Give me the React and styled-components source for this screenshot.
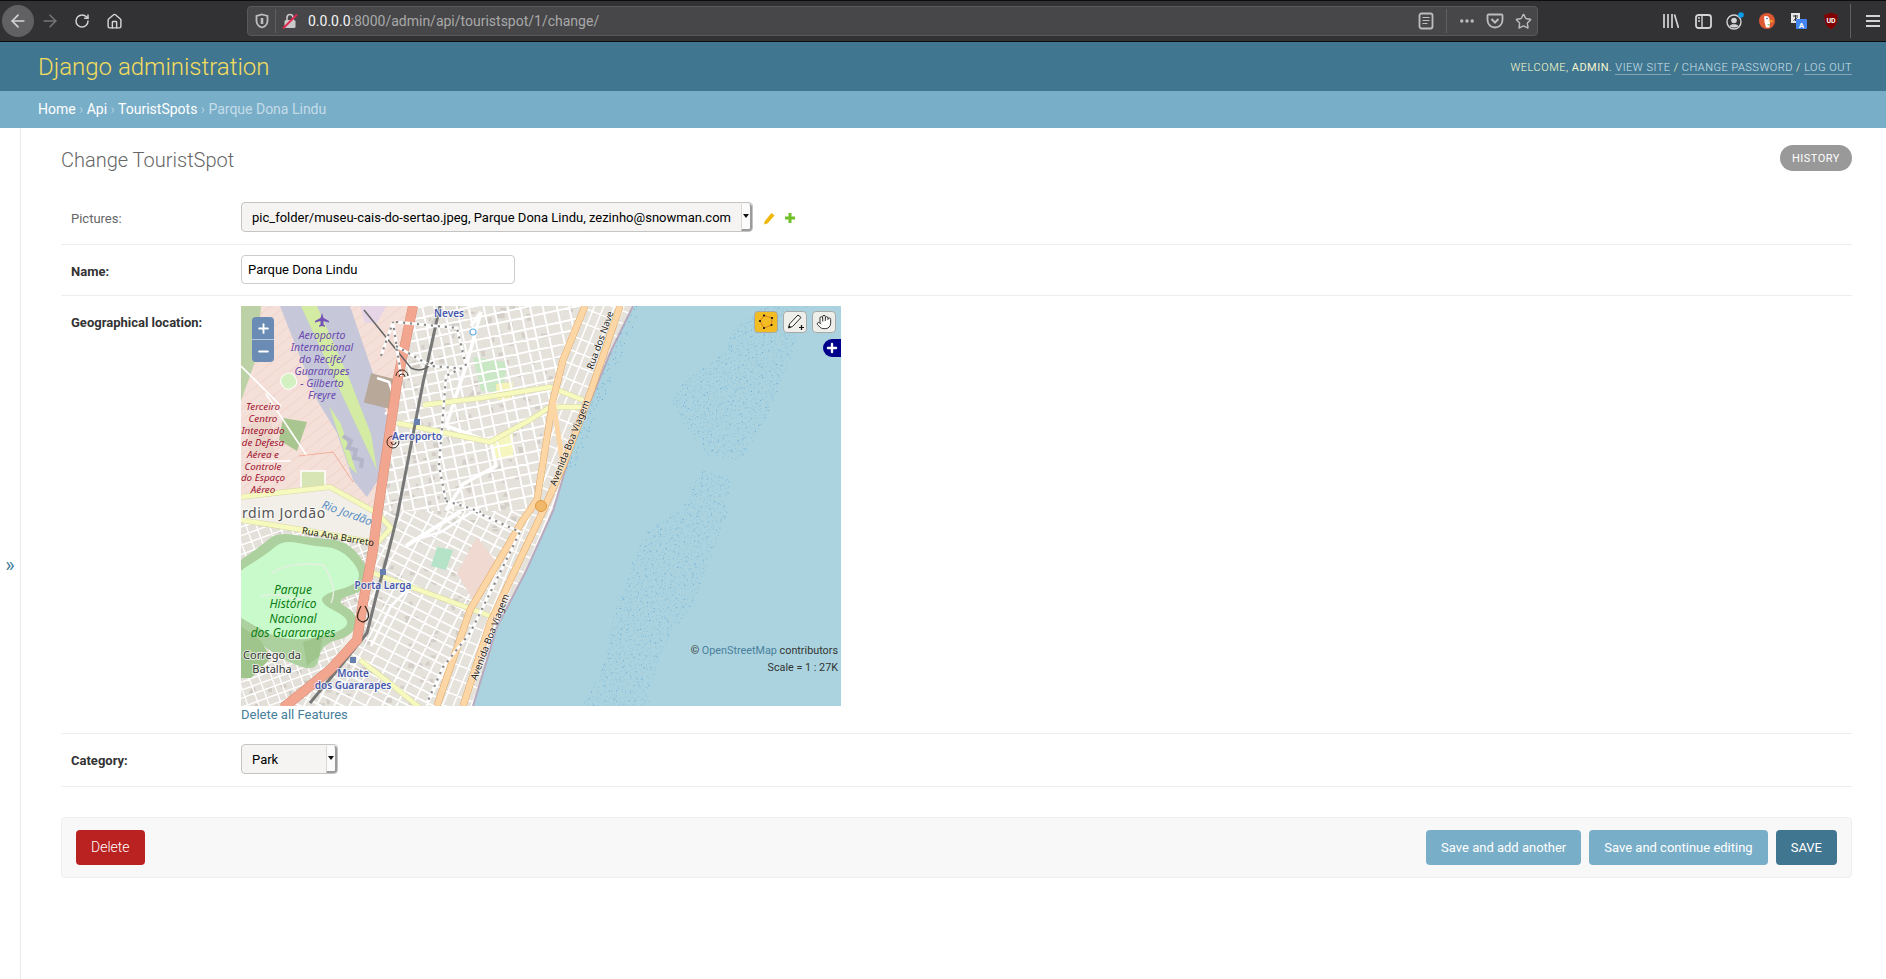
import React from 'react'
import styled, { createGlobalStyle } from 'styled-components'
import { ArrowLeft, ArrowRight, RotateCw, House, Star, Ellipsis, Hand, Plus, Minus } from 'lucide-react'

const GlobalStyle = createGlobalStyle`
  html, body { margin: 0; padding: 0; background: #fff; }
  body { font-family: Roboto, "Liberation Sans", sans-serif; font-size: 14px; color: #333; }
  * { box-sizing: border-box; }
`

/* ---------- browser chrome ---------- */
const BrowserBar = styled.div`
  display: flex;
  align-items: center;
  height: 42px;
  padding-left: 2px;
  background: #323234;
  border-top: 1px solid #0c0c0d;
  border-bottom: 1px solid #0c0c0d;
  color: #d4d4d5;
`
const Slot = styled.div`
  width: 32px;
  height: 32px;
  flex: none;
  display: flex;
  align-items: center;
  justify-content: center;
  border-radius: 50%;
  background: ${p => (p.$active ? '#616163' : 'transparent')};
  color: ${p => (p.$dim ? '#77777a' : 'inherit')};
`
const MenuSlot = styled(Slot)`
  margin-left: 6px;
`
const ChromeGap = styled.div`
  width: 3px;
  flex: none;
`
const UrlBar = styled.div`
  width: 1291px;
  height: 30px;
  margin: 0 117px;
  flex: none;
  display: flex;
  align-items: center;
  background: #474749;
  border: 1px solid #59595b;
  border-radius: 4px;
  color: #bdbdbe;
`
const UrlIcon = styled.div`
  width: ${p => p.$w || 28}px;
  flex: none;
  display: flex;
  justify-content: center;
`
const Sep = styled.div`
  width: 1px;
  height: ${p => p.$h || 24}px;
  background: #606062;
  flex: none;
`
const UrlText = styled.div`
  flex: 1;
  margin-left: 5px;
  font-size: 14px;
  color: #a9a9aa;
  white-space: nowrap;
  b { font-weight: 400; color: #f4f4f5; }
`

/* ---------- django header ---------- */
const Header = styled.header`
  display: flex;
  justify-content: space-between;
  align-items: center;
  height: 49px;
  padding: 0 34px 0 38px;
  background: #417690;
`
const Branding = styled.h1`
  margin: 0;
  font-size: 24px;
  font-weight: 300;
  color: #f5dd5d;
`
const UserTools = styled.div`
  padding-top: 1px;
  font-size: 11px;
  font-weight: 300;
  letter-spacing: 0.5px;
  color: #ffc;
  text-transform: uppercase;
  strong { font-weight: 400; color: #f5f5d0; }
`
const UserLink = styled.a`
  color: #cfe3ee;
  border-bottom: 1px solid rgba(255, 255, 255, 0.35);
`
const Breadcrumbs = styled.div`
  height: 37px;
  padding: 0 0 2px 38px;
  display: flex;
  align-items: center;
  background: #79aec8;
  color: #c4dce8;
  font-size: 14px;
  font-weight: 300;
  a { color: #fff; font-weight: 400; }
  span { font-weight: 400; }
`

/* ---------- page ---------- */
const Main = styled.div`
  display: flex;
  min-height: 851px;
`
const SideToggle = styled.div`
  width: 21px;
  flex: none;
  border-right: 1px solid #eaeaea;
  display: flex;
  align-items: center;
  justify-content: center;
  color: #447e9b;
  font-size: 20px;
  padding: 22px 0 0 0;
`
const Content = styled.main`
  flex: 1;
  padding: 17px 34px 0 40px;
`
const TitleRow = styled.div`
  display: flex;
  justify-content: space-between;
  align-items: flex-start;
  height: 47px;
`
const Title = styled.h2`
  margin: 0;
  font-size: 20px;
  font-weight: 300;
  line-height: 30px;
  color: #666;
`
const HistoryLink = styled.a`
  width: 72px;
  height: 26px;
  display: flex;
  align-items: center;
  justify-content: center;
  border-radius: 15px;
  background: #999;
  color: #fff;
  font-size: 11px;
  letter-spacing: 0.5px;
  text-transform: uppercase;
`
const Row = styled.div`
  display: flex;
  padding: 10px 0 ${p => p.$pb || 11}px 10px;
  border-bottom: 1px solid #eee;
`
const Label = styled.label`
  width: 170px;
  flex: none;
  padding-top: 9px;
  font-size: 13px;
  line-height: 16px;
  font-weight: ${p => (p.$bold ? 700 : 400)};
  color: ${p => (p.$bold ? '#333' : '#666')};
`
const Controls = styled.div`
  display: flex;
  align-items: center;
  gap: 10px;
`
const SelectBox = styled.div`
  position: relative;
  width: ${p => p.$w}px;
  height: 30px;
  display: flex;
  align-items: center;
  padding-left: ${p => p.$pl}px;
  background: #f5f4f2;
  border: 1px solid #c4c4c4;
  border-radius: 4px;
  color: #000;
  font-size: 13px;
  white-space: nowrap;
`
const SelectArrow = styled.span`
  position: absolute;
  top: 1px;
  right: 0;
  bottom: 0;
  width: 11px;
  background: #fbfbfb;
  border-left: 1px solid #d8d8d8;
  border-right: 2px solid #9b9b9b;
  border-bottom: 2px solid #9b9b9b;
  border-radius: 0 3px 3px 0;
  &::after {
    content: '';
    position: absolute;
    left: 1px;
    top: 10px;
    border: 3px solid transparent;
    border-top: 4px solid #111;
  }
`
const RelatedIcons = styled.div`
  display: flex;
  align-items: center;
  gap: 9px;
  padding-top: 2px;
`
const TextInput = styled.input`
  width: 274px;
  height: 29px;
  padding: 0 6px;
  margin-bottom: 0;
  border: 1px solid #ccc;
  border-radius: 4px;
  color: #000;
  font: 13px Roboto, sans-serif;
`
const MapColumn = styled.div`
  width: 600px;
`
const MapFrame = styled.div`
  position: relative;
  width: 600px;
  height: 400px;
  overflow: hidden;
  background: #aad3df;
  svg.base { display: block; }
`
const ZoomBox = styled.div`
  position: absolute;
  left: 11px;
  top: 11px;
  width: 22px;
  height: 45px;
  display: flex;
  flex-direction: column;
  border-radius: 4px;
  overflow: hidden;
  background: #6a8bb4;
  color: #fff;
`
const ZoomButton = styled.div`
  flex: 1;
  display: flex;
  align-items: center;
  justify-content: center;
  border-top: ${p => (p.$second ? '1px solid #b7c7dc' : 'none')};
`
const DrawTools = styled.div`
  position: absolute;
  top: 5px;
  right: 5px;
  display: flex;
  gap: 5px;
`
const DrawTool = styled.div`
  width: 24px;
  height: 22px;
  display: flex;
  align-items: center;
  justify-content: center;
  border: 1px solid #a9a9a9;
  border-radius: 4px;
  background: ${p => (p.$active ? '#f2bd22' : '#eeeeea')};
  color: #222;
`
const LayerSwitch = styled.div`
  position: absolute;
  top: 33px;
  right: 0;
  width: 18px;
  height: 18px;
  display: flex;
  align-items: center;
  justify-content: center;
  background: #00008b;
  border-radius: 9px 0 0 9px;
  color: #fff;
`
const MapNotes = styled.div`
  position: absolute;
  right: 3px;
  top: 336px;
  font-size: 10.8px;
  line-height: 17px;
  text-align: right;
  color: #333;
  a { color: #4a7f9c; }
`
const DeleteFeatures = styled.a`
  display: block;
  margin-top: 1px;
  font-size: 13px;
  line-height: 16px;
  color: #447e9b;
`
const SubmitRow = styled.div`
  display: flex;
  justify-content: space-between;
  height: 61px;
  margin-top: 30px;
  padding: 12px 14px;
  background: #f8f8f8;
  border: 1px solid #eee;
  border-radius: 4px;
`
const ButtonGroup = styled.div`
  display: flex;
  gap: 8px;
`
const ActionButton = styled.a`
  height: 35px;
  display: flex;
  align-items: center;
  padding: 0 15px;
  border-radius: 4px;
  background: ${p => p.$bg || '#79aec8'};
  color: #fff;
  font-size: 13px;
  font-weight: 400;
`
const DeleteButton = styled(ActionButton)`
  padding: 0 15px 2px;
  font-size: 14px;
  font-weight: 300;
`

/* ---------- map drawing ---------- */
function makeRandom(seed) {
  let s = seed
  return () => {
    s = (s + 0x6d2b79f5) | 0
    let t = Math.imul(s ^ (s >>> 15), 1 | s)
    t = (t + Math.imul(t ^ (t >>> 7), 61 | t)) ^ t
    return ((t ^ (t >>> 14)) >>> 0) / 4294967296
  }
}
function inside(pt, poly) {
  let hit = false
  for (let i = 0, j = poly.length - 1; i < poly.length; j = i++) {
    const [xi, yi] = poly[i]
    const [xj, yj] = poly[j]
    if (yi > pt[1] !== yj > pt[1] && pt[0] < ((xj - xi) * (pt[1] - yi)) / (yj - yi) + xi) hit = !hit
  }
  return hit
}
function stipple(poly, gap, seed) {
  const rand = makeRandom(seed)
  let d = ''
  for (let y = -5; y < 405; y += gap) {
    for (let x = 225; x < 605; x += gap) {
      const px = x + (rand() - 0.5) * gap
      const py = y + (rand() - 0.5) * gap
      if (inside([px, py], poly)) d += `M${px.toFixed(1)} ${py.toFixed(1)}h.01`
    }
  }
  return d
}
function gridLines(cx, cy, angle, stepA, stepB, seed) {
  const rand = makeRandom(seed)
  const c = Math.cos((angle * Math.PI) / 180)
  const s = Math.sin((angle * Math.PI) / 180)
  const R = 420
  let d = ''
  for (let i = -R; i <= R; i += stepA) {
    const o = i + (rand() - 0.5) * 2
    d += `M${(cx - R * c - o * s).toFixed(1)} ${(cy - R * s + o * c).toFixed(1)}L${(cx + R * c - o * s).toFixed(1)} ${(cy + R * s + o * c).toFixed(1)}`
  }
  for (let i = -R; i <= R; i += stepB) {
    const o = i + (rand() - 0.5) * 3
    d += `M${(cx + o * c + R * s).toFixed(1)} ${(cy + o * s - R * c).toFixed(1)}L${(cx + o * c - R * s).toFixed(1)} ${(cy + o * s + R * c).toFixed(1)}`
  }
  return d
}
function buildings(count, seed) {
  const rand = makeRandom(seed)
  let d = ''
  for (let i = 0; i < count; i++) {
    const x = rand() * 400
    const y = rand() * 400
    d += `M${x.toFixed(1)} ${y.toFixed(1)}h${(2 + rand() * 5).toFixed(1)}v${(2 + rand() * 5).toFixed(1)}h-${(2 + rand() * 5).toFixed(1)}z`
  }
  return d
}
const pts = poly => poly.map(p => p.join(',')).join(' ')
const curve = line => 'M' + line.map(p => p.join(' ')).join('L')
function smooth(poly) {
  const mid = (a, b) => [(a[0] + b[0]) / 2, (a[1] + b[1]) / 2]
  let d = `M${mid(poly[poly.length - 1], poly[0]).join(' ')}`
  poly.forEach((p, i) => {
    d += `Q${p.join(' ')} ${mid(p, poly[(i + 1) % poly.length]).join(' ')}`
  })
  return d + 'z'
}

const reefNorth = [[522, -2], [569, -2], [556, 31], [546, 64], [529, 104], [502, 154], [469, 151], [446, 124], [431, 97], [442, 77], [486, 44], [489, 27]]
const reefSouth = [[462, 162], [489, 174], [486, 207], [469, 254], [452, 297], [432, 327], [416, 361], [406, 402], [339, 402], [362, 361], [372, 311], [387, 274], [391, 256], [404, 227], [426, 211], [446, 197], [449, 181]]
const coastShoal = [[392, 0], [400, 0], [376, 60], [352, 120], [332, 165], [322, 165], [345, 100], [370, 45]]
const reefPathA = stipple(reefNorth, 3.7, 11) + stipple(reefSouth, 3.7, 23)
const reefPathB = stipple(reefNorth, 9, 37) + stipple(reefSouth, 9, 41) + stipple(coastShoal, 5, 43)

const coast = [[392, 0], [370, 45], [351, 91], [330, 145], [312, 205], [285, 265], [256, 321], [232, 400], [605, 400], [605, 0]]
const topCity = [[172, 0], [346, 0], [322, 54], [312, 94], [296, 194], [282, 214], [136, 214], [146, 144], [156, 77]]
const lowCity = [[136, 205], [290, 205], [229, 304], [196, 400], [42, 400], [89, 364], [116, 334], [122, 297], [132, 244]]
const westCity = [[0, 215], [136, 237], [120, 300], [90, 362], [42, 400], [0, 400]]
const beachStrip = [[346, 0], [392, 0], [351, 91], [312, 205], [256, 321], [232, 400], [196, 400], [229, 304], [296, 194], [312, 94], [322, 54]]
const airfield = [[0, 0], [172, 0], [156, 77], [146, 144], [136, 205], [90, 181], [0, 191]]
const park = [[-12, 262], [20, 240], [36, 226], [72, 232], [104, 234], [126, 258], [128, 284], [92, 294], [118, 308], [112, 330], [80, 338], [76, 366], [46, 356], [22, 340], [4, 326], [-12, 318]]
const parkInner = [[-10, 270], [26, 248], [42, 234], [72, 240], [98, 242], [118, 262], [118, 278], [82, 288], [80, 298], [108, 312], [104, 324], [68, 334], [36, 332], [14, 320], [-10, 306]]
const apron = [[39, 0], [109, 0], [149, 117], [139, 171], [126, 191], [112, 174], [96, 127], [76, 94]]
const strip = [[60, 0], [76, 0], [108, 72], [130, 128], [136, 164], [122, 134], [96, 78]]
const stripTwo = [[88, 100], [100, 118], [116, 168], [108, 160]]

const topGrid = gridLines(250, 100, -12, 11, 12, 1)
const lowGrid = gridLines(170, 310, 27, 10, 14, 2)
const westGrid = gridLines(50, 370, -20, 8, 10, 3)
const stripGrid = gridLines(320, 100, -68, 9, 14, 4)
const housesA = buildings(520, 7)
const housesB = buildings(520, 9)

const motorway = [[172, 0], [156, 77], [146, 144], [136, 211], [132, 244], [122, 297], [116, 334], [89, 364], [42, 402]]
const railway = [[199, 0], [182, 77], [156, 211], [146, 251], [136, 287], [126, 327], [102, 357], [69, 397]]
const aveInner = [[344, 0], [322, 54], [312, 94], [296, 194], [282, 214], [229, 304], [196, 400]]
const aveOuter = [[379, 0], [362, 50], [350, 85], [322, 160], [302, 205], [249, 317], [222, 400]]
const yellowRoads = [
  [[182, 99], [240, 92], [309, 81], [342, 94]],
  [[156, 117], [249, 136], [289, 114], [309, 101], [342, 101]],
  [[0, 191], [89, 181], [136, 207], [150, 222], [136, 237], [62, 224], [0, 214]],
  [[132, 267], [192, 289], [252, 311]],
  [[119, 354], [150, 378], [179, 402]],
]
const dottedRoads = [
  [[155, 16], [216, 22], [225, 60], [205, 70], [198, 160], [205, 195]],
  [[216, 197], [279, 226], [252, 281], [229, 327], [202, 361], [186, 397]],
  [[140, 50], [152, 16], [160, 70]],
  [[155, 40], [190, 60], [215, 62]],
  [[205, 195], [222, 200], [240, 206]],
]
const whiteRoads = [
  [[230, 20], [240, 6], [225, 60], [205, 120], [250, 136], [255, 160], [222, 178], [205, 204], [215, 197]],
  [[170, 235], [200, 226], [240, 200]],
  [[165, 285], [150, 300], [130, 340]],
]
const tint = '#e5e2dc'

function Label2({ lines, x, y, step, ...rest }) {
  return lines.map((line, i) => (
    <text key={line} x={x} y={y + i * step} textAnchor="middle" {...rest}>{line}</text>
  ))
}

function MapArt() {
  return (
    <svg className="base" width="600" height="400" viewBox="0 0 600 400" fontFamily="'Noto Sans', sans-serif">
      <defs>
        <pattern id="hatch" width="9" height="9" patternUnits="userSpaceOnUse" patternTransform="rotate(-38)">
          <rect width="9" height="9" fill="#f4e0d8" />
          <path d="M0 0H9" stroke="#e9bfb4" strokeWidth="0.7" />
        </pattern>
        <clipPath id="c1"><polygon points={pts(topCity)} /></clipPath>
        <clipPath id="c2"><polygon points={pts(lowCity)} /></clipPath>
        <clipPath id="c3"><polygon points={pts(westCity)} /></clipPath>
        <clipPath id="c4"><polygon points={pts(beachStrip)} /></clipPath>
      </defs>

      <rect width="600" height="400" fill="#f2efe9" />
      <polygon points={pts(airfield)} fill="url(#hatch)" />
      <polygon points="0,0 20,0 16,50 0,95" fill="#bcd2a6" />
      <polygon points="42,112 66,116 56,145 38,134" fill="#aac690" />
      <polygon points="6,120 30,110 34,150 10,150" fill="#ecd6cc" />
      <polygon points="119,0 145,0 136,17 124,17" fill="#e6d5e6" />

      <polygon points={pts(apron)} fill="#c6c7d8" />
      <polygon points={pts(strip)} fill="#d3eba2" />
      <polygon points={pts(stripTwo)} fill="#d3eba2" />
      <rect x="40" y="68" width="15" height="15" rx="6" fill="#d3f0c0" stroke="#fff" transform="rotate(-30 47 75)" />
      <path d="M102 130l8 5-3 7 8 2-2 8 8 2-1 8" fill="none" stroke="#b4b5c8" strokeWidth="4" />
      <rect x="126" y="70" width="26" height="30" fill="#b7a899" transform="rotate(14 139 85)" />
      <path d="M136 72l12 4 8 24-12 8" fill="none" stroke="#fff" strokeWidth="2.5" />
      <path d="M25 88L66 150M0 60L40 100M20 155h30" stroke="#fff" strokeWidth="1.6" fill="none" />
      <path d="M60 165h24v18h-24z" fill="#d7e5b4" stroke="#fff" strokeWidth="1.5" />
      <path d="M58 150l34 -4 20 30" stroke="#f09a80" strokeWidth="0.7" fill="none" />

      <g clipPath="url(#c1)">
        <rect width="600" height="400" fill={tint} />
        <path d={housesA} transform="translate(0 -40)" fill="#d3cec7" />
        <polygon points="232,51 266,56 262,87 240,85" fill="#cbe8c6" />
        <polygon points="255,78 272,76 270,92 256,94" fill="#f6f3b8" />
        <polygon points="252,132 272,128 272,152 254,152" fill="#f6f6c0" />
        <path d={topGrid} stroke="#fff" strokeWidth="1.9" fill="none" />
      </g>
      <g clipPath="url(#c2)">
        <rect width="600" height="400" fill={tint} />
        <path d={housesB} transform="translate(0 30)" fill="#d3cec7" />
        <path d={lowGrid} stroke="#fff" strokeWidth="1.7" fill="none" />
        <polygon points="236,231 256,257 236,301 216,267" fill="#f0d9d0" />
        <polygon points="196,241 212,244 205,264 190,260" fill="#b5e3c8" />
      </g>
      <g clipPath="url(#c3)">
        <rect width="600" height="400" fill="#e3dfd9" />
        <path d={housesA} fill="#cfc9c2" />
        <path d={westGrid} stroke="#fff" strokeWidth="1.4" fill="none" />
      </g>
      <g clipPath="url(#c4)">
        <rect width="600" height="400" fill={tint} />
        <path d={stripGrid} stroke="#fff" strokeWidth="1.5" fill="none" />
      </g>

      <path d={smooth(park)} fill="#add19e" />
      <path d={smooth(parkInner)} fill="#c8facc" />
      <path d="M30 268c10-8 30-12 52-9 8 12 14 25 8 38M20 290c20-5 30 5 42 3" fill="none" stroke="#e6efe0" strokeWidth="1.4" />
      <polygon points="0,320 20,335 30,352 10,372 0,372" fill="#9fc58c" />
      <polygon points="62,336 82,330 78,350 66,360" fill="#9fc58c" />

      {whiteRoads.map((r, i) => (
        <path key={i} d={curve(r)} fill="none" stroke="#fff" strokeWidth={i === 0 ? 3.5 : 2.6} />
      ))}
      <path d="M165 240L220 205" stroke="#fff" strokeWidth="4" fill="none" />

      {yellowRoads.map((r, i) => (
        <g key={i} fill="none" strokeLinejoin="round">
          <path d={curve(r)} stroke="#d8d8a0" strokeWidth="5.5" />
          <path d={curve(r)} stroke="#f7fabf" strokeWidth="4.4" />
        </g>
      ))}

      <polygon points={pts(coast)} fill="#aad3df" />
      <path d={curve(coast.slice(0, 8))} fill="none" stroke="#b9a9be" strokeWidth="2" />
      <path d={reefPathA} stroke="#8bbfdb" strokeWidth="1.1" strokeLinecap="round" fill="none" />
      <path d={reefPathB} stroke="#5aa2d6" strokeWidth="1" strokeLinecap="round" fill="none" />

      {[aveInner, aveOuter].map((r, i) => (
        <g key={i} fill="none" strokeLinejoin="round">
          <path d={curve(r)} stroke="#e0a868" strokeWidth="7" />
          <path d={curve(r)} stroke="#fcd6a4" strokeWidth="6" />
        </g>
      ))}
      <path d="M312 94L322 160" stroke="#fcd6a4" strokeWidth="5" fill="none" />
      <path d={curve(railway)} fill="none" stroke="#777" strokeWidth="3" />
      <g fill="none" strokeLinejoin="round">
        <path d={curve(motorway)} stroke="#d98d76" strokeWidth="10" />
        <path d={curve(motorway)} stroke="#f3a68f" strokeWidth="9" />
      </g>
      <path d="M123 4L170 62M170 62q12 6 22-6" fill="none" stroke="#666" strokeWidth="1.5" />

      {dottedRoads.map((r, i) => (
        <g key={i} fill="none">
          <path d={curve(r)} stroke="#fff" strokeWidth="2.8" />
          <path d={curve(r)} stroke="#8a8a8a" strokeWidth="2.2" strokeDasharray="2.2 4.800" />
        </g>
      ))}

      <path d="M120 300c-5 10-5 14 2 16 7-2 7-8 2-16" fill="none" stroke="#3a2a22" strokeWidth="1.3" />
      <path d="M146 136a6 6 0 1 0 12 0a6 6 0 0 0-12 0zM150 136a2.500 2.500 0 1 0 5 0" fill="none" stroke="#3a2a22" strokeWidth="1" />
      <path d="M155 70a6 6 0 0 1 12 0M158 71a3 3 0 0 1 6 0" fill="none" stroke="#3a2a22" strokeWidth="1" />
      <rect x="173" y="113" width="6" height="6" fill="#6680b0" />
      <rect x="139" y="263" width="6" height="6" fill="#6680b0" />
      <rect x="109" y="351" width="6" height="6" fill="#6680b0" />
      <circle cx="232" cy="26" r="3" fill="#fff" stroke="#6ab3e6" strokeWidth="1.2" />
      <circle cx="300" cy="200" r="5.500" fill="#f0b868" stroke="#e09a40" />
      <path d="M81 7l1.500 5 5.500 3v1.500l-5.500-1.500v3.500l1.500 1.200v1.100l-3-.8-3 .8v-1.100l1.500-1.200v-3.500l-5.500 1.500v-1.500l5.500-3z" fill="#7250b5" />

      <g fontSize="10.500" fontStyle="italic" fill="#6a4ab0">
        <Label2 lines={['Aeroporto', 'Internacional', 'do Recife/', 'Guararapes', '- Gilberto', 'Freyre']} x={81} y={33} step={11.9} />
      </g>
      <g fontSize="9.800" fontStyle="italic" fill="#a01030">
        <Label2 lines={['Terceiro', 'Centro', 'Integrado', 'de Defesa', 'Aérea e', 'Controle', 'do Espaço', 'Aéreo']} x={22} y={104} step={11.9} />
      </g>
      <g fontSize="11" fontWeight="600" fill="#4658ad" stroke="#fff" strokeWidth="2" paintOrder="stroke" strokeOpacity="0.7">
        <text x="208" y="11" textAnchor="middle" fontSize="10">Neves</text>
        <text x="176" y="134" textAnchor="middle" fontSize="10">Aeroporto</text>
        <text x="142" y="283" textAnchor="middle" fontSize="10">Porta Larga</text>
        <Label2 lines={['Monte', 'dos Guararapes']} x={112} y={371} step={12} fontSize="10" />
      </g>
      <text x="1" y="212" fontSize="14" letterSpacing="0.6" fill="#555" stroke="#fff" strokeWidth="2" paintOrder="stroke" strokeOpacity="0.6">rdim Jordão</text>
      <text x="106" y="211" fontSize="11.500" fontStyle="italic" fill="#5b8fc4" textAnchor="middle" transform="rotate(20 106 207)">Rio Jordão</text>
      <text x="97" y="234" fontSize="9.500" fill="#222" textAnchor="middle" transform="rotate(10 97 231)">Rua Ana Barreto</text>
      <g fontSize="12" fontStyle="italic" fill="#0c7d12">
        <Label2 lines={['Parque', 'Histórico', 'Nacional', 'dos Guararapes']} x={52} y={288} step={14.4} />
      </g>
      <g fontSize="11" fill="#333" stroke="#fff" strokeWidth="2" paintOrder="stroke" strokeOpacity="0.7">
        <Label2 lines={['Corrego da', 'Batalha']} x={31} y={353} step={14} />
      </g>
      <g fontSize="9.500" fill="#222" stroke="#fff" strokeWidth="1.5" paintOrder="stroke" strokeOpacity="0.5">
        <text x="249" y="334" textAnchor="middle" transform="rotate(-69 249 331)">Avenida Boa Viagem</text>
        <text x="329" y="140" textAnchor="middle" transform="rotate(-68 329 137)">Avenida Boa Viagem</text>
        <text x="349" y="66" transform="rotate(-70 349 63)">Rua dos Nave</text>
      </g>
    </svg>
  )
}

function PolygonToolIcon() {
  return (
    <svg width="20" height="18" viewBox="0 0 20 18">
      <path d="M4 8L8 2.500 16 5 15.500 12 8 15z" fill="none" stroke="#d9702a" strokeWidth="0.8" />
      <path d="M8 2.500h.01M16 5h.01M15.500 12h.01M8 15h.01M4 8h.01" stroke="#111" strokeWidth="2.200" strokeLinecap="round" />
    </svg>
  )
}
function PencilToolIcon() {
  return (
    <svg width="20" height="18" viewBox="0 0 20 18">
      <path d="M13 2l3 2.500-8.500 9-4 1.500 1-4z" fill="#fbfbf8" stroke="#222" strokeWidth="1" strokeLinejoin="round" />
      <path d="M3.500 15l.6-2.600 2 1.700z" fill="#111" />
      <path d="M14 14.500h5M16.500 12v5" stroke="#111" strokeWidth="1.200" />
    </svg>
  )
}

/* ---------- browser icons ---------- */
const ico = { fill: 'none', stroke: 'currentColor', strokeWidth: 1.6 }
const ShieldIcon = () => (
  <svg width="16" height="16" viewBox="0 0 16 16" {...ico} strokeWidth="1.8"><path d="M8 1.500l5.500 1.500v5c0 3.500-2.500 5.500-5.500 6.500-3-1-5.500-3-5.500-6.500v-5z" /><path d="M8 5v6" strokeWidth="2.600" /></svg>
)
const LockIcon = () => (
  <svg width="16" height="16" viewBox="0 0 16 16">
    <rect x="2.500" y="7" width="11" height="8" rx="1.500" fill="#c9c9ca" />
    <path d="M5 7V4.500a3 3 0 0 1 6 0V7" fill="none" stroke="#c9c9ca" strokeWidth="1.600" />
    <path d="M1 15.500L15 1.500" stroke="#e22850" strokeWidth="2" />
  </svg>
)
const ReaderIcon = () => (
  <svg width="16" height="18" viewBox="0 0 16 18" {...ico} strokeWidth="1.800"><rect x="1.500" y="1.500" width="13" height="15" rx="2" /><path d="M4.500 5.500h7M4.500 8.500h7M4.500 11.500h5" strokeWidth="1.200" /></svg>
)
const PocketIcon = () => (
  <svg width="18" height="16" viewBox="0 0 18 16" {...ico} strokeWidth="1.800"><path d="M2.500 1.500h13a1 1 0 0 1 1 1V7a7.500 7.500 0 0 1-15 0V2.500a1 1 0 0 1 1-1z" /><path d="M5.500 6L9 9.500 12.500 6" strokeWidth="2" /></svg>
)
const LibraryIcon = () => (
  <svg width="16" height="14" viewBox="0 0 16 14" {...ico} strokeWidth="1.700"><path d="M1 0v14M5 0v14M9 0v14M11.500 .5l4 13.500" /></svg>
)
const SidebarIcon = () => (
  <svg width="17" height="15" viewBox="0 0 17 15" {...ico} strokeWidth="1.800"><rect x="1" y="1" width="15" height="13" rx="2.500" /><path d="M7 1v13M3 4h2M3 7h2" strokeWidth="1.400" /></svg>
)
const AccountIcon = () => (
  <svg width="20" height="20" viewBox="0 0 20 20">
    <g fill="none" stroke="currentColor" strokeWidth="1.400"><circle cx="9" cy="11" r="7" /></g>
    <circle cx="9" cy="9.500" r="2.800" fill="currentColor" />
    <path d="M4.500 15c1-2.500 8-2.500 9 0-2 2-7 2-9 0z" fill="currentColor" />
    <circle cx="16" cy="4" r="2.800" fill="#0a9fe8" />
  </svg>
)
const DuckIcon = () => (
  <svg width="16" height="16" viewBox="0 0 16 16">
    <circle cx="8" cy="8" r="8" fill="#de5833" />
    <path d="M5 3.500c2.500-1.500 5 0 5.500 2.500l.5 3-.5 5.500H7L5.500 9z" fill="#fff" />
    <path d="M9 8l4.500-1v2.500z" fill="#f0b323" />
    <path d="M8 11.500l2.500-.5v1.800z" fill="#65bc46" />
    <circle cx="8" cy="5.500" r=".8" fill="#2d4f8e" />
  </svg>
)
const TranslateIcon = () => (
  <svg width="16" height="16" viewBox="0 0 16 16">
    <rect x="0" y="0" width="9" height="10" fill="#e4e4e4" />
    <path d="M2 3h5M4.500 2v6M2.500 7.500l4-3" stroke="#333" strokeWidth="1" fill="none" />
    <rect x="5" y="6" width="11" height="10" rx="1" fill="#4285f4" />
    <text x="7.700" y="14.500" fontSize="8" fontWeight="700" fill="#fff" fontFamily="Roboto, sans-serif">A</text>
  </svg>
)
const UblockIcon = () => (
  <svg width="16" height="18" viewBox="0 0 16 18">
    <path d="M8 .5l7 2c0 8-1.500 12-7 15-5.500-3-7-7-7-15z" fill="#800000" stroke="#3c3c3c" strokeWidth=".6" />
    <text x="8" y="10.500" textAnchor="middle" fontSize="7" fontWeight="700" fill="#fff" fontFamily="Roboto, sans-serif">UD</text>
  </svg>
)
const MenuIcon = () => (
  <svg width="14" height="14" viewBox="0 0 14 14" stroke="currentColor" strokeWidth="1.800"><path d="M0 2h14M0 7h14M0 12h14" /></svg>
)
const EditIcon = () => (
  <svg width="12" height="13" viewBox="0 0 12 13"><path d="M8.500 1l3 2.500-7 8L1 12.500l.8-3.400z" fill="#efb80b" /></svg>
)
const AddIcon = () => (
  <svg width="12" height="12" viewBox="0 0 12 12"><path d="M4.500 1h3v3.500H11v3H7.500V11h-3V7.500H1v-3h3.500z" fill="#70bf2b" /></svg>
)

function App() {
  return (
    <>
      <GlobalStyle />
      <BrowserBar>
        <Slot $active><ArrowLeft size={20} strokeWidth={2} /></Slot>
        <Slot $dim><ArrowRight size={20} strokeWidth={1.8} /></Slot>
        <Slot><RotateCw size={16} strokeWidth={2.2} /></Slot>
        <Slot><House size={17} strokeWidth={2} /></Slot>
        <UrlBar>
          <UrlIcon $w={27}><ShieldIcon /></UrlIcon>
          <Sep />
          <UrlIcon $w={27}><LockIcon /></UrlIcon>
          <UrlText><b>0.0.0.0</b>:8000/admin/api/touristspot/1/change/</UrlText>
          <UrlIcon><ReaderIcon /></UrlIcon>
          <UrlIcon $w={6} />
          <Sep />
          <UrlIcon $w={6} />
          <UrlIcon><Ellipsis size={18} strokeWidth={2.6} /></UrlIcon>
          <UrlIcon><PocketIcon /></UrlIcon>
          <UrlIcon><Star size={17} strokeWidth={2} /></UrlIcon>
        </UrlBar>
        <Slot><LibraryIcon /></Slot>
        <Slot><SidebarIcon /></Slot>
        <Slot><AccountIcon /></Slot>
        <Slot><DuckIcon /></Slot>
        <Slot><TranslateIcon /></Slot>
        <Slot><UblockIcon /></Slot>
        <ChromeGap />
        <Sep $h={34} />
        <MenuSlot><MenuIcon /></MenuSlot>
      </BrowserBar>

      <Header>
        <Branding>Django administration</Branding>
        <UserTools>
          Welcome, <strong>admin</strong>. <UserLink>View site</UserLink> / <UserLink>Change password</UserLink> / <UserLink>Log out</UserLink>
        </UserTools>
      </Header>
      <Breadcrumbs>
        <a>Home</a>&nbsp;›&nbsp;<a>Api</a>&nbsp;›&nbsp;<a>TouristSpots</a>&nbsp;›&nbsp;<span>Parque Dona Lindu</span>
      </Breadcrumbs>

      <Main>
        <SideToggle>»</SideToggle>
        <Content>
          <TitleRow>
            <Title>Change TouristSpot</Title>
            <HistoryLink>History</HistoryLink>
          </TitleRow>

          <Row $pb={12}>
            <Label>Pictures:</Label>
            <Controls>
              <SelectBox $w={512} $pl={10}>
                pic_folder/museu-cais-do-sertao.jpeg, Parque Dona Lindu, zezinho@snowman.com
                <SelectArrow />
              </SelectBox>
              <RelatedIcons><EditIcon /><AddIcon /></RelatedIcons>
            </Controls>
          </Row>

          <Row>
            <Label $bold>Name:</Label>
            <TextInput readOnly value="Parque Dona Lindu" />
          </Row>

          <Row $pb={10}>
            <Label $bold>Geographical location:</Label>
            <MapColumn>
              <MapFrame>
                <MapArt />
                <ZoomBox>
                  <ZoomButton><Plus size={15} strokeWidth={3} /></ZoomButton>
                  <ZoomButton $second><Minus size={15} strokeWidth={3} /></ZoomButton>
                </ZoomBox>
                <DrawTools>
                  <DrawTool $active><PolygonToolIcon /></DrawTool>
                  <DrawTool><PencilToolIcon /></DrawTool>
                  <DrawTool><Hand size={16} strokeWidth={1.4} fill="#fff" /></DrawTool>
                </DrawTools>
                <LayerSwitch><Plus size={14} strokeWidth={4} /></LayerSwitch>
                <MapNotes>
                  © <a>OpenStreetMap</a> contributors<br />
                  Scale = 1 : 27K
                </MapNotes>
              </MapFrame>
              <DeleteFeatures>Delete all Features</DeleteFeatures>
            </MapColumn>
          </Row>

          <Row $pb={12}>
            <Label $bold>Category:</Label>
            <SelectBox $w={97} $pl={10}>
              Park
              <SelectArrow />
            </SelectBox>
          </Row>

          <SubmitRow>
            <DeleteButton $bg="#ba2121">Delete</DeleteButton>
            <ButtonGroup>
              <ActionButton>Save and add another</ActionButton>
              <ActionButton>Save and continue editing</ActionButton>
              <ActionButton $bg="#417690">SAVE</ActionButton>
            </ButtonGroup>
          </SubmitRow>
        </Content>
      </Main>
    </>
  )
}

export default App
